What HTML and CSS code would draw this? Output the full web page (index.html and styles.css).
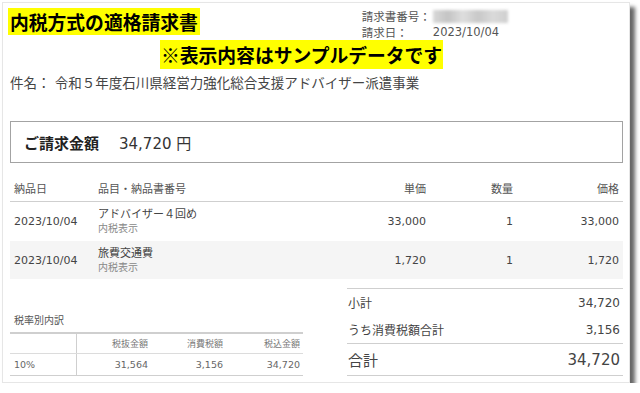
FILE: index.html
```html
<!DOCTYPE html>
<html lang="ja">
<head>
<meta charset="utf-8">
<title>内税方式の適格請求書</title>
<link rel="stylesheet" href="styles.css">
</head>
<body>
<div class="card">
  <header class="head">
    <h1 class="title">内税方式の適格請求書</h1>
    <dl class="meta">
      <dt>請求書番号：</dt><dd><span class="blur"></span></dd>
      <dt>請求日：</dt><dd>2023/10/04</dd>
    </dl>
  </header>
  <p class="note">※表示内容はサンプルデータです</p>
  <p class="subject">件名： 令和５年度石川県経営力強化総合支援アドバイザー派遣事業</p>

  <div class="amount">
    <span class="amount-label">ご請求金額</span>
    <span class="amount-value">34,720 円</span>
  </div>

  <table class="items">
    <colgroup>
      <col class="c-date"><col class="c-name"><col class="c-price"><col class="c-qty"><col class="c-total">
    </colgroup>
    <thead>
      <tr><th>納品日</th><th>品目・納品書番号</th><th class="r">単価</th><th class="r">数量</th><th class="r">価格</th></tr>
    </thead>
    <tbody>
      <tr class="row1">
        <td>2023/10/04</td>
        <td><div class="name">アドバイザー４回め</div><div class="sub">内税表示</div></td>
        <td class="r">33,000</td><td class="r">1</td><td class="r">33,000</td>
      </tr>
      <tr class="row2">
        <td>2023/10/04</td>
        <td><div class="name">旅費交通費</div><div class="sub">内税表示</div></td>
        <td class="r">1,720</td><td class="r">1</td><td class="r">1,720</td>
      </tr>
    </tbody>
  </table>

  <div class="bottom">
    <section class="taxes">
      <h2 class="taxes-title">税率別内訳</h2>
      <table class="tax-table">
        <colgroup><col class="t1"><col class="t2"><col class="t3"><col class="t4"></colgroup>
        <thead>
          <tr><th></th><th class="r">税抜金額</th><th class="r">消費税額</th><th class="r">税込金額</th></tr>
        </thead>
        <tbody>
          <tr><td>10%</td><td class="r">31,564</td><td class="r">3,156</td><td class="r">34,720</td></tr>
        </tbody>
      </table>
    </section>
    <section class="summary">
      <div class="sum-row first"><span>小計</span><span>34,720</span></div>
      <div class="sum-row"><span>うち消費税額合計</span><span>3,156</span></div>
      <div class="sum-row total"><span>合計</span><span>34,720</span></div>
    </section>
  </div>
</div>
</body>
</html>
```

FILE: styles.css
```css
html, body {
  margin: 0;
  padding: 0;
  background: #ffffff;
}
body {
  font-family: "DejaVu Sans", "Noto Sans CJK JP", sans-serif;
  color: #444;
}
.card {
  box-sizing: border-box;
  width: 628px;
  height: 381px;
  margin: 2px 0 0 2px;
  padding: 5px 6px 0 7px;
  border: 1px solid #e6e6e6;
  background: #fff;
  box-shadow: 5px 5px 4px rgba(0, 0, 0, 0.6);
}
.head {
  display: flex;
  align-items: flex-start;
}
.title {
  margin: 0 0 0 -2px;
  padding: 0 2px;
  background: #ffff00;
  color: #000;
  font-family: "Noto Sans CJK JP", sans-serif;
  font-size: 18.8px;
  font-weight: bold;
  line-height: 27px;
}
.meta {
  margin: 0 0 0 162px;
  display: grid;
  grid-template-columns: 71px auto;
  font-size: 11.5px;
  line-height: 16px;
  color: #555;
}
.meta dt {
  font-family: "Noto Sans CJK JP", sans-serif;
}
.meta dd {
  margin: 0;
  display: flex;
  align-items: center;
}
.blur {
  display: block;
  width: 75px;
  height: 13px;
  background: linear-gradient(90deg, #d8d8d8, #c4c4c4 20%, #dedede 40%, #c8c8c8 60%, #dadada 80%, #cfcfcf);
  filter: blur(1.5px);
}
.note {
  margin: 0 0 0 150px;
  width: max-content;
  padding: 0 1px;
  background: #ffff00;
  color: #000;
  font-family: "Noto Sans CJK JP", sans-serif;
  font-size: 18.8px;
  font-weight: bold;
  line-height: 29px;
}
.subject {
  margin: 4px 0 0;
  font-size: 13.5px;
  line-height: 20px;
  color: #444;
}
.amount {
  box-sizing: border-box;
  margin-top: 28px;
  height: 42px;
  border: 1px solid #a3a3a3;
  display: flex;
  align-items: center;
  gap: 20px;
  padding-left: 13px;
  font-size: 15px;
}
.amount-label {
  font-family: "Noto Sans CJK JP", sans-serif;
  font-weight: bold;
  color: #222;
}
.amount-value {
  color: #333;
}
.items {
  margin-top: 12px;
  width: 100%;
  border-collapse: collapse;
  table-layout: fixed;
}
.c-date { width: 84px; }
.c-price { width: 100px; }
.c-qty { width: 87px; }
.c-total { width: 106px; }
.items th {
  height: 26px;
  padding: 0 4px;
  text-align: left;
  font-weight: normal;
  font-size: 11px;
  color: #555;
  border-bottom: 1px solid #cfcfcf;
  vertical-align: middle;
}
.items td {
  padding: 0 4px;
  font-size: 11px;
  color: #444;
  vertical-align: middle;
}
.items .r { text-align: right; }
.row1 td { height: 39px; }
.row2 td { height: 38px; background: #f5f5f5; }
.name {
  font-size: 11px;
  line-height: 15px;
  color: #444;
}
.sub {
  font-size: 10px;
  line-height: 14px;
  color: #888;
}
.bottom {
  display: flex;
  gap: 44px;
  margin-top: 9px;
}
.taxes {
  width: 293px;
}
.taxes-title {
  margin: 26px 0 4px;
  font-size: 10px;
  line-height: 14px;
  font-weight: normal;
  color: #555;
  padding-left: 4px;
}
.tax-table {
  width: 100%;
  border-collapse: collapse;
  table-layout: fixed;
  border-top: 2px solid #cfcfcf;
}
.t1 { width: 66px; }
.t2 { width: 75px; }
.t3 { width: 75px; }
.tax-table th {
  height: 19px;
  padding: 0 3px 0 4px;
  font-weight: normal;
  font-size: 9px;
  color: #777;
  border-bottom: 1px solid #dcdcdc;
}
.tax-table td {
  height: 21px;
  padding: 0 3px 0 4px;
  font-size: 9.5px;
  color: #666;
  border-bottom: 1px solid #cfcfcf;
}
.tax-table th:first-child,
.tax-table td:first-child {
  border-right: 1px solid #cfcfcf;
  text-align: left;
}
.tax-table .r { text-align: right; }
.summary {
  flex: 1;
}
.sum-row {
  display: flex;
  justify-content: space-between;
  align-items: center;
  height: 27px;
  padding: 0 3px 0 1px;
  font-size: 12px;
  color: #444;
}
.sum-row.first {
  border-top: 1px solid #cfcfcf;
}
.sum-row.total {
  height: 31px;
  border-top: 1px solid #cfcfcf;
  border-bottom: 1px solid #cfcfcf;
  font-size: 15px;
}
```
